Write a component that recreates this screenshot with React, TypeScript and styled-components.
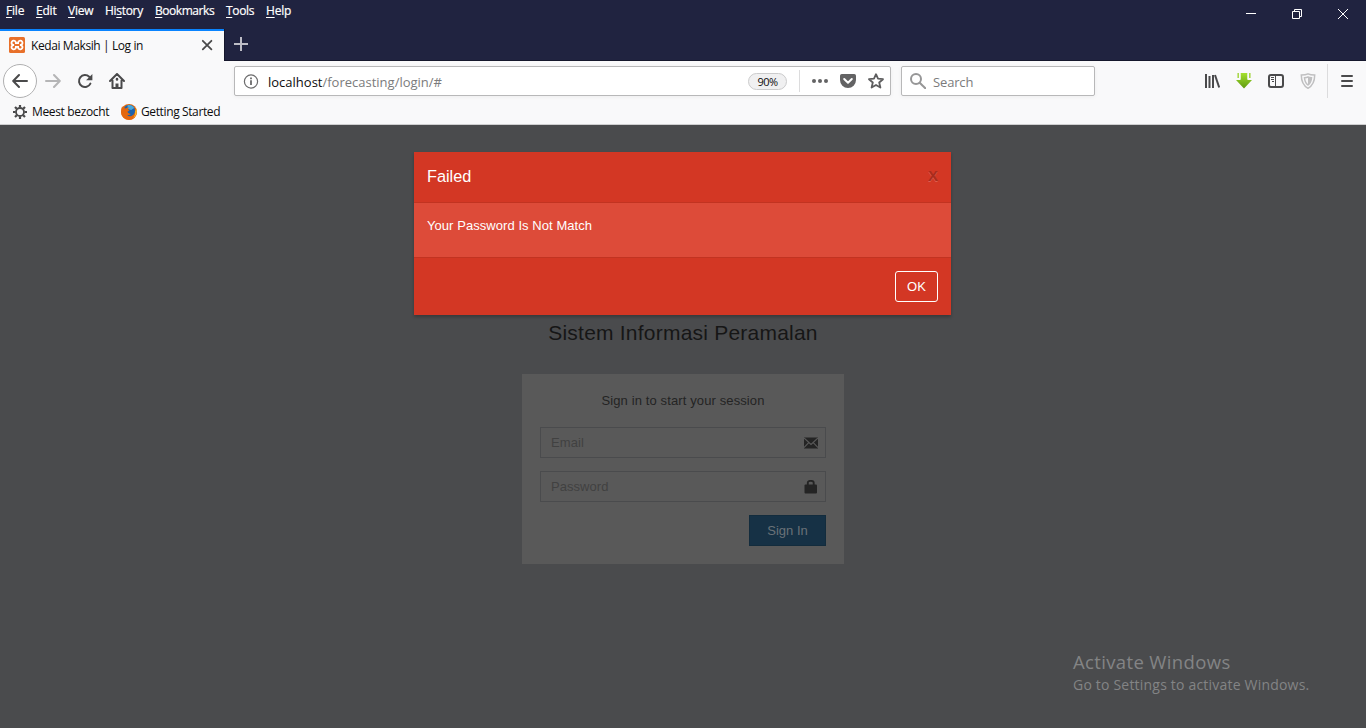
import React from "react";
import styled, { createGlobalStyle } from "styled-components";

const Global = createGlobalStyle`
  * { box-sizing: border-box; }
  html, body { margin: 0; padding: 0; overflow: hidden; }
  svg { display: block; flex: none; }
  button, input { font: inherit; }
`;

const Screen = styled.div`
  width: 1366px;
  height: 728px;
  display: flex;
  flex-direction: column;
  font-family: "Open Sans", "Noto Sans", sans-serif;
  font-size: 12px;
  color: #0c0c0d;
  overflow: hidden;
`;

const Label = styled.span<{ $ls?: number }>`
  white-space: nowrap;
  letter-spacing: ${(p) => p.$ls ?? 0}px;
`;

/* ---------- title bar and tabs ---------- */
const TitleBar = styled.header`
  height: 29px;
  flex: none;
  display: flex;
  justify-content: space-between;
  background: #202340;
  color: #fff;
`;
const Menu = styled.nav`
  display: flex;
  padding: 2px 0 0 6px;
  line-height: 17px;
  font-size: 12px;
`;
const MenuItem = styled.div<{ $w: number; $ls: number }>`
  width: ${(p) => p.$w}px;
  letter-spacing: ${(p) => p.$ls}px;
  white-space: nowrap;
  -webkit-text-stroke: 0.2px #fff;
  u { text-underline-offset: 2px; text-decoration-thickness: 1px; text-decoration-skip-ink: none; }
`;
const WindowControls = styled.div`
  display: flex;
  width: 138px;
`;
const ControlButton = styled.div`
  width: 46px;
  height: 28px;
  display: flex;
  align-items: center;
  justify-content: center;
`;
const TabStrip = styled.div`
  height: 32px;
  flex: none;
  display: flex;
  background: #202340;
  border-bottom: 1px solid #15172c;
`;
const Tab = styled.div`
  width: 224px;
  height: 32px;
  border-top: 2px solid #0a84ff;
  background: #f9f9fa;
  display: flex;
  align-items: center;
  padding: 0 11px 2px 9px;
`;
const TabTitle = styled(Label)`
  flex: 1;
  padding-left: 6px;
`;
const NewTab = styled.div`
  width: 32px;
  border-left: 1px solid #15172c;
  display: flex;
  align-items: center;
  justify-content: center;
  padding-bottom: 1px;
`;

/* ---------- toolbars ---------- */
const NavBar = styled.div`
  height: 40px;
  flex: none;
  display: flex;
  align-items: center;
  background: #f9f9fa;
  padding-left: 3px;
`;
const BackButton = styled.div`
  width: 34px;
  height: 34px;
  border: 1px solid #b0b0b1;
  border-radius: 50%;
  background: #fff;
  display: flex;
  align-items: center;
  justify-content: center;
`;
const NavIcon = styled.div<{ $w?: number }>`
  width: ${(p) => p.$w ?? 32}px;
  display: flex;
  justify-content: center;
`;
const Field = styled.div<{ $w: number; $left: number }>`
  width: ${(p) => p.$w}px;
  height: 30px;
  margin-left: ${(p) => p.$left}px;
  border: 1px solid #b8b8b9;
  border-radius: 2px;
  background: #fff;
  box-shadow: 0 1px 4px rgba(0, 0, 0, 0.05);
  display: flex;
  align-items: center;
  padding-left: 8px;
  font-size: 13px;
  color: #7b7b7c;
  b { font-weight: 400; color: #0c0c0d; }
`;
const Address = styled(Label)`
  flex: 1;
  padding: 1px 0 0 9px;
`;
const Zoom = styled.div`
  width: 39px;
  height: 17px;
  border: 1px solid #cbcbcc;
  border-radius: 9px;
  background: #f0f0f1;
  color: #0c0c0d;
  font-size: 11px;
  line-height: 16px;
  text-align: center;
  letter-spacing: -0.55px;
`;
const Divider = styled.div<{ $h: number; $l: number; $r: number }>`
  width: 1px;
  height: ${(p) => p.$h}px;
  margin: 0 ${(p) => p.$r}px 0 ${(p) => p.$l}px;
  background: #dcdcdd;
`;
const SearchHint = styled(Label)`
  padding: 1px 0 0 7px;
`;
const ToolGroup = styled.div`
  margin-left: auto;
  display: flex;
  align-items: center;
  height: 40px;
`;
const Bookmarks = styled.div`
  height: 24px;
  flex: none;
  display: flex;
  align-items: center;
  background: #f9f9fa;
  border-bottom: 1px solid #cfcfd0;
  padding: 0 0 1px 13px;
`;
const Bookmark = styled.div<{ $w: number; $gap: number }>`
  display: flex;
  align-items: center;
  gap: ${(p) => p.$gap}px;
  width: ${(p) => p.$w}px;
`;
const BookmarkTitle = styled(Label)`
  margin-top: -1px;
`;

/* ---------- web page ---------- */
const Page = styled.main`
  position: relative;
  flex: 1;
  background: #4a4b4d;
  font-family: "Liberation Sans", Arial, sans-serif;
  font-size: 13px;
  display: flex;
  flex-direction: column;
  align-items: center;
`;
const Dialog = styled.section`
  width: 537px;
  height: 163px;
  margin: 27px 1px 0 0;
  flex: none;
  background: #d33724;
  color: #fff;
  box-shadow: 0 2px 3px rgba(0, 0, 0, 0.25);
`;
const DialogHeader = styled.div`
  height: 51px;
  display: flex;
  justify-content: space-between;
  border-bottom: 1px solid #c23321;
  padding: 14px 13px 0 13px;
  font-size: 16.3px;
  line-height: 20px;
`;
const DialogClose = styled.span`
  color: #a82c1d;
  font-size: 15px;
  font-weight: 700;
  line-height: 19px;
  text-shadow: 0 1px 0 #dc5f50;
`;
const DialogBody = styled.div`
  height: 55px;
  background: #dd4b39;
  border-bottom: 1px solid #c23321;
  padding: 14px 13px;
  line-height: 18px;
`;
const DialogFooter = styled.div`
  display: flex;
  justify-content: flex-end;
  padding: 13px;
`;
const OkButton = styled.button`
  width: 43px;
  height: 31px;
  padding: 0;
  border: 1px solid #fff;
  border-radius: 3px;
  background: transparent;
  color: #fff;
`;
const Brand = styled.h1`
  margin: 5px 0 0;
  height: 26px;
  font-weight: 400;
  font-size: 21px;
  line-height: 26px;
  color: #161616;
`;
const LoginBox = styled.form`
  width: 322px;
  height: 190px;
  margin-top: 28px;
  background: #595959;
  padding: 18px;
  display: flex;
  flex-direction: column;
`;
const LoginHint = styled.p`
  margin: 0 0 18px;
  height: 17px;
  line-height: 17px;
  text-align: center;
  color: #242424;
`;
const InputRow = styled.div`
  height: 31px;
  flex: none;
  margin-bottom: 13px;
  border: 1px solid #4a4b4d;
  display: flex;
  align-items: center;
  justify-content: space-between;
  padding: 0 7px 0 10px;
  color: #414141;
`;
const SignIn = styled.button`
  width: 77px;
  height: 31px;
  align-self: flex-end;
  border: 1px solid #132c3d;
  background: #163145;
  color: #6a7278;
  padding: 0;
`;
const Watermark = styled.aside`
  position: absolute;
  left: 1073px;
  top: 524px;
  font-family: "Open Sans", "Noto Sans", sans-serif;
  color: #838485;
  display: flex;
  flex-direction: column;
`;
const WatermarkTitle = styled(Label)`
  font-size: 18.5px;
  line-height: 25px;
`;
const WatermarkText = styled(Label)`
  font-size: 14px;
  line-height: 21px;
`;

const menus: [string, string, string, number, number][] = [
  ["", "F", "ile", 30, -0.2],
  ["", "E", "dit", 32, -0.2],
  ["", "V", "iew", 37, -0.2],
  ["Hi", "s", "tory", 50, -0.3],
  ["", "B", "ookmarks", 71, -0.45],
  ["", "T", "ools", 40, -0.35],
  ["", "H", "elp", 40, -0.2],
];

const ink = "#4a4a4b";

export default function App() {
  return (
    <Screen>
      <Global />
      <TitleBar>
        <Menu>
          {menus.map(([a, k, b, w, ls]) => (
            <MenuItem key={k + b} $w={w} $ls={ls}>{a}<u>{k}</u>{b}</MenuItem>
          ))}
        </Menu>
        <WindowControls>
          <ControlButton>
            <svg width="10" height="10" viewBox="0 0 10 10"><path d="M0 4.5h10" stroke="#fff" /></svg>
          </ControlButton>
          <ControlButton>
            <svg width="10" height="10" viewBox="0 0 10 10" fill="none" stroke="#fff"><path d="M.5 2.5h7v7h-7zM2.5 2.5v-2h7v7h-2" /></svg>
          </ControlButton>
          <ControlButton>
            <svg width="10" height="10" viewBox="0 0 10 10" stroke="#fff"><path d="M0 0l10 10M10 0L0 10" /></svg>
          </ControlButton>
        </WindowControls>
      </TitleBar>

      <TabStrip>
        <Tab>
          <svg width="16" height="16" viewBox="0 0 16 16">
            <rect width="16" height="16" rx="1.5" fill="#e8702a" />
            <path d="M5 8a2.200 2.200 0 1 1 1.900-2.400v.6h2.200v-.6A2.200 2.200 0 1 1 11 8a2.200 2.200 0 1 1-1.900 2.400v-.6H6.900v.6A2.200 2.200 0 1 1 5 8z" fill="none" stroke="#fff" strokeWidth="1.800" />
          </svg>
          <TabTitle $ls={-0.4}>Kedai Maksih | Log in</TabTitle>
          <svg width="12" height="12" viewBox="0 0 12 12" stroke={ink} strokeWidth="1.8" strokeLinecap="round"><path d="M1.8 1.8l8.6 8.6M10.4 1.8l-8.6 8.6" /></svg>
        </Tab>
        <NewTab>
          <svg width="14" height="14" viewBox="0 0 14 14" stroke="#bdbdc6" strokeWidth="2"><path d="M7 0v14M0 7h14" /></svg>
        </NewTab>
      </TabStrip>

      <NavBar>
        <BackButton>
          <svg width="16" height="16" viewBox="0 0 16 16" fill="none" stroke={ink} strokeWidth="2" strokeLinecap="round" strokeLinejoin="round"><path d="M15 8H1.5M7 2L1.2 8 7 14" /></svg>
        </BackButton>
        <NavIcon>
          <svg width="16" height="16" viewBox="0 0 16 16" fill="none" stroke="#b5b5b6" strokeWidth="2" strokeLinecap="round" strokeLinejoin="round"><path d="M1 8h13.5M9 2l5.8 6L9 14" /></svg>
        </NavIcon>
        <NavIcon>
          <svg width="16" height="16" viewBox="0 0 16 16">
            <path d="M13.4 10.6A6 6 0 1 1 12.2 3.7" fill="none" stroke={ink} strokeWidth="2" strokeLinecap="round" />
            <path d="M15.4 1v6.3H9.1z" fill={ink} />
          </svg>
        </NavIcon>
        <NavIcon>
          <svg width="16" height="16" viewBox="0 0 16 16" fill="none" stroke={ink} strokeWidth="2" strokeLinecap="round" strokeLinejoin="round">
            <path d="M1 8l7-7 7 7M3.5 7.5V15h9V7.5" />
            <path d="M8 14v-3.5" strokeWidth="3" strokeLinecap="butt" /><path d="M8 6v.5" strokeWidth="2.5" />
          </svg>
        </NavIcon>
        <Field $w={657} $left={101}>
          <svg width="16" height="15" viewBox="0 0 16 15" fill="none" stroke="#6b6b6c"><circle cx="8" cy="7.5" r="6.6" strokeWidth="1.2" /><path d="M8 6.3V11M8 3.6v1.6" strokeWidth="1.8" /></svg>
          <Address $ls={0}><b>localhost</b>/forecasting/login/#</Address>
          <Zoom>90%</Zoom>
          <Divider $h={22} $l={12} $r={12} />
          <svg width="16" height="16" viewBox="0 0 16 16" fill="#636364"><circle cx="2" cy="8" r="2" /><circle cx="8" cy="8" r="2" /><circle cx="14" cy="8" r="2" /></svg>
          <NavIcon $w={40}>
            <svg width="16" height="16" viewBox="0 0 16 16"><path d="M1.8 1h12.4A1.8 1.8 0 0 1 16 2.8V7a8 8 0 0 1-16 0V2.8A1.8 1.8 0 0 1 1.8 1z" fill="#636364" /><path d="M4.2 6L8 9.7 11.8 6" fill="none" stroke="#fff" strokeWidth="2" strokeLinecap="round" strokeLinejoin="round" /></svg>
          </NavIcon>
          <NavIcon $w={16}>
            <svg width="16" height="16" viewBox="0 0 16 16" fill="none" stroke="#5e5e5f" strokeWidth="1.8" strokeLinejoin="round"><path d="M8 1.2l2 4.500 5 .5-3.800 3.300 1.200 5L8 11.900l-4.400 2.600 1.200-5L1 6.200l5-.5z" /></svg>
          </NavIcon>
          <NavIcon $w={6} />
        </Field>
        <Field $w={194} $left={10}>
          <svg width="16" height="16" viewBox="0 0 16 16" fill="none" stroke="#969697" strokeWidth="2"><circle cx="6" cy="6" r="5" /><path d="M9.7 9.7l5.6 5.6" strokeLinecap="round" /></svg>
          <SearchHint $ls={-0.15}>Search</SearchHint>
        </Field>
        <ToolGroup>
          <NavIcon>
            <svg width="16" height="16" viewBox="0 0 16 16" fill="none" stroke={ink} strokeWidth="2"><path d="M2 1v14M5.500 3v12M9 2v13" strokeWidth="2" /><path d="M11 2l4.200 12.500" /></svg>
          </NavIcon>
          <NavIcon>
            <svg width="16" height="16" viewBox="0 0 16 16">
              <defs><linearGradient id="dl" x2="0" y2="1"><stop stopColor="#a4e02d" /><stop offset="1" stopColor="#5f9a10" /></linearGradient></defs>
              <path d="M4.500 0h7v7H16L8 15.500 0 7h4.500z" fill="url(#dl)" />
              <path d="M2.200 0v5M13.800 0v5" stroke="#a9d84c" strokeWidth="1.600" /><path d="M4 .2v6M12 .2v6" stroke="#f9f9fa" />
            </svg>
          </NavIcon>
          <NavIcon>
            <svg width="16" height="16" viewBox="0 0 16 16" fill="none" stroke={ink}><rect x="1" y="2" width="14" height="12" rx="2" strokeWidth="2" /><path d="M7.500 2v12" /><path d="M3 4.500h3M3 6.500h3M4 8.500h2" /></svg>
          </NavIcon>
          <NavIcon>
            <svg width="16" height="16" viewBox="0 0 16 16" fill="none" stroke="#c0c0c1"><path d="M8 .8c2 1 4.500 1.200 6.700 1.200C14.700 8 13 12.500 8 15.300 3 12.500 1.300 8 1.300 2 3.500 2 6 1.800 8 .8z" strokeWidth="1.500" /><path d="M8 4c1.200.5 2.200.6 3.500.7C11.300 8 10.300 10.300 8 12 5.700 10.300 4.700 8 4.500 4.700 5.800 4.600 6.800 4.500 8 4z" strokeWidth="1.500" /><path d="M8 4v8c2.300-1.700 3.300-4 3.500-7.300z" fill="#c0c0c1" stroke="none" /></svg>
          </NavIcon>
          <Divider $h={34} $l={3} $r={0} />
          <NavIcon $w={38}>
            <svg width="12" height="12" viewBox="0 0 12 12" stroke={ink} strokeWidth="2" strokeLinecap="round"><path d="M1 1h10M1 6h10M1 11h10" /></svg>
          </NavIcon>
        </ToolGroup>
      </NavBar>

      <Bookmarks>
        <Bookmark $w={108} $gap={5}>
          <svg width="14" height="14" viewBox="0 0 14 14" fill="none" stroke={ink}><circle cx="7" cy="7" r="4" strokeWidth="1.800" /><path d="M7 0v2.500M7 11.500V14M0 7h2.500M11.500 7H14M2 2l1.800 1.800M10.200 10.200L12 12M12 2l-1.800 1.800M3.800 10.200L2 12" strokeWidth="2.200" /></svg>
          <BookmarkTitle $ls={-0.35}>Meest bezocht</BookmarkTitle>
        </Bookmark>
        <Bookmark $w={110} $gap={4}>
          <svg width="16" height="16" viewBox="0 0 16 16">
            <circle cx="8" cy="8" r="8" fill="#e66a0c" />
            <circle cx="8.300" cy="6.600" r="5.800" fill="#1d62ab" />
            <path d="M6.500 1.200c3-.7 5.500.8 6.700 2.800l-3 2-3.500-1z" fill="#49a8dc" />
            <path d="M1 2.500c-1 3-1.500 7 .6 10C4.500 16 9 16.800 12.300 14.500c3.200-2.300 4-6 3.200-9.500-.3 2-.8 2.600-1.300 3-.3 3-2.200 4.800-4.700 4.800-1.800 0-3-1-3-2 1.500.5 2.500-.2 3.200-.9-1.500-.2-2.500-.8-3.200-1.900.3-.9 1-1 1.700-1.300.3-.8-.6-1-1.200-1.200.1-.9.600-1.400 1.200-1.900-1.500-.1-2.500.3-3.200 1C3.500 4 1.800 3.500 1 2.500z" fill="#e4670d" />
            <path d="M15.300 4.500c1.200 4-.2 8-3.500 9.800 2-2 2.700-4.500 2.400-6.800z" fill="#fbc72e" />
          </svg>
          <BookmarkTitle $ls={-0.38}>Getting Started</BookmarkTitle>
        </Bookmark>
      </Bookmarks>

      <Page>
        <Dialog>
          <DialogHeader><Label $ls={0}>Failed</Label><DialogClose>X</DialogClose></DialogHeader>
          <DialogBody><Label $ls={0.06}>Your Password Is Not Match</Label></DialogBody>
          <DialogFooter><OkButton>OK</OkButton></DialogFooter>
        </Dialog>
        <Brand><Label $ls={0.22}>Sistem Informasi Peramalan</Label></Brand>
        <LoginBox>
          <LoginHint><Label $ls={0.12}>Sign in to start your session</Label></LoginHint>
          <InputRow>
            <Label $ls={0.1}>Email</Label>
            <svg width="14" height="12" viewBox="0 0 14 12"><rect y="0.500" width="14" height="11" fill="#242424" /><path d="M0 1l7 6.500L14 1M0 10.500l4.500-4.700M14 10.500L9.500 5.800" fill="none" stroke="#595959" strokeWidth="1.100" /></svg>
          </InputRow>
          <InputRow>
            <Label $ls={0.05}>Password</Label>
            <svg width="14" height="14" viewBox="0 0 14 14"><rect x="0.500" y="4.500" width="12.500" height="9" rx="1" fill="#242424" /><path d="M3.800 6V2.800C3.800 1.300 5 .9 6.700.9s3 .4 3 1.900V6" fill="none" stroke="#242424" strokeWidth="1.900" /></svg>
          </InputRow>
          <SignIn type="button"><Label $ls={0}>Sign In</Label></SignIn>
        </LoginBox>
        <Watermark>
          <WatermarkTitle $ls={0.36}>Activate Windows</WatermarkTitle>
          <WatermarkText $ls={0.2}>Go to Settings to activate Windows.</WatermarkText>
        </Watermark>
      </Page>
    </Screen>
  );
}
